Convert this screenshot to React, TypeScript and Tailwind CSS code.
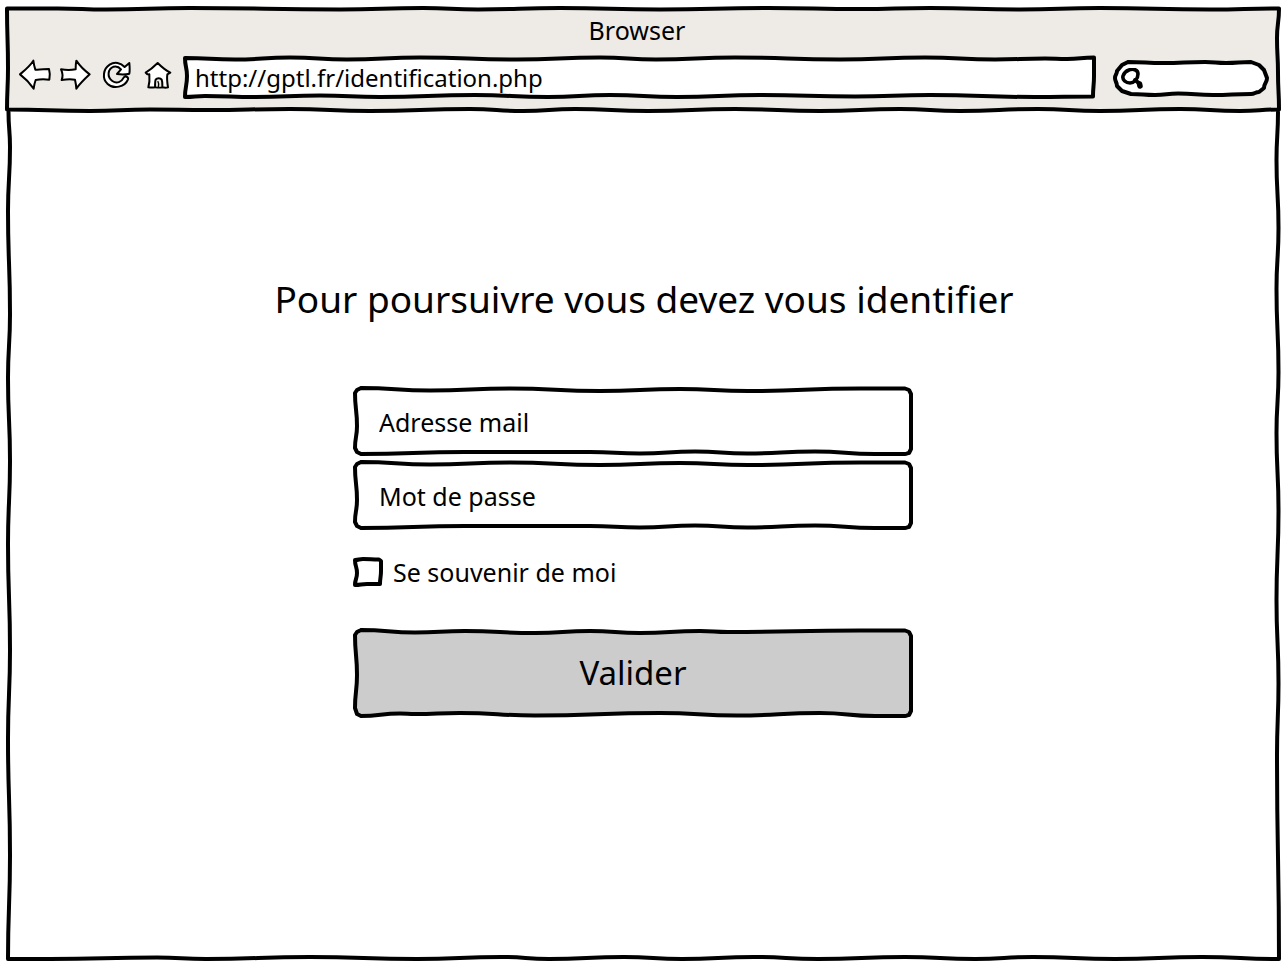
import type { ReactNode } from 'react';

type Point = [number, number];

// Joins points with soft waves: level tangents on long runs, straight cuts on corners.
function wavyPath(points: Point[], closed = true): string {
  const list = closed ? [...points, points[0]] : points;
  return list
    .map(([x, y], i) => {
      if (i === 0) return `M${x} ${y}`;
      const [px, py] = list[i - 1];
      const dx = Math.abs(x - px);
      const dy = Math.abs(y - py);
      if (dx > dy * 3) {
        const mx = (x + px) / 2;
        return `C${mx} ${py} ${mx} ${y} ${x} ${y}`;
      }
      if (dy > dx * 3) {
        const my = (y + py) / 2;
        return `C${px} ${my} ${x} ${my} ${x} ${y}`;
      }
      return `L${x} ${y}`;
    })
    .join(' ');
}

function Outline({
  width,
  height,
  points,
  fill = 'fill-white',
  closed = true,
}: {
  width: number;
  height: number;
  points: Point[];
  fill?: string;
  closed?: boolean;
}) {
  return (
    <svg
      aria-hidden="true"
      className="pointer-events-none absolute inset-0 h-full w-full overflow-visible"
      viewBox={`0 0 ${width} ${height}`}
      preserveAspectRatio="none"
    >
      <path
        d={wavyPath(points, closed)}
        className={`${fill} stroke-black`}
        strokeWidth="4"
        strokeLinejoin="round"
        strokeLinecap="round"
        vectorEffect="non-scaling-stroke"
      />
    </svg>
  );
}

const headerOutline: Point[] = [
  [-1, 0.5], [50, 0.5], [98, 1.5], [182, 0], [332, 1.5], [415, 0], [470, 1.5], [552, 0], [652, 1.5],
  [760, 0], [852, 1], [922, 0], [1012, 1.5], [1092, 0], [1202, 1.5], [1271, 0.5],
  [1269, 30], [1270, 65], [1271, 101.5],
  [1232, 103], [1172, 101], [1092, 103], [1030, 101], [952, 103], [892, 101], [812, 103], [727, 101],
  [640, 103], [567, 101], [515, 103], [462, 101], [362, 103], [282, 101], [200, 102], [142, 101.5],
  [82, 103], [-1, 101.5], [0, 60],
];

const bodyOutline: Point[] = [
  [0.5, 2], [2, 37], [0, 101], [2, 204], [0, 268], [2, 351], [0, 434], [2, 540], [0, 629], [2, 745], [0, 849],
  [42, 849], [149, 847.5], [198, 849], [302, 847], [409, 849], [494, 847], [541, 849], [616, 847],
  [674, 849], [746, 847], [810, 849], [897, 847], [967, 849], [1025, 847], [1107, 849], [1194, 847],
  [1271, 849],
  [1269, 645], [1270.5, 573], [1268.5, 490], [1270.5, 401], [1268.5, 323], [1270.5, 262],
  [1268.5, 179], [1270.5, 118], [1268.5, 50], [1270, 2],
];

const addressOutline: Point[] = [
  [0, 0], [50, 1.5], [105, -0.5], [162, 1.5], [235, -0.5], [332, 1.5], [415, -0.5], [471, 1.5], [550, -0.5],
  [655, 1.5], [740, -0.5], [810, 1.5], [860, 0.5], [882, 1], [909, -0.5],
  [909, 18], [908, 38.5],
  [850, 39], [745, 37], [670, 38.5], [575, 37], [492, 39], [425, 37], [363, 39], [290, 37], [195, 39],
  [135, 37.5], [70, 39], [20, 38], [0, 39], [2, 18],
];

const searchOutline: Point[] = [
  [15, 2], [50, 3], [92, 2], [113, 3], [138, 2], [146, 5], [151, 10], [154, 18], [151, 28], [146, 32],
  [138, 34], [100, 35], [65, 33.5], [42, 35], [18, 34], [9, 31], [4, 26], [2, 18], [4, 11], [9, 5],
];

const fieldOutline: Point[] = [
  [6, 0], [75, 2.5], [155, 0.5], [245, 3], [325, 1], [393, 3], [505, 0.5], [550, 0.5],
  [554, 2], [556, 6], [556, 61], [554, 65], [550, 66],
  [520, 66], [460, 63.5], [392, 65.5], [340, 63.5], [285, 65.5], [235, 64], [110, 64], [6, 66],
  [2, 64], [0, 60], [2, 38], [0, 5], [2, 2],
];

const buttonOutline: Point[] = [
  [6, 0], [60, 2.5], [110, 1], [180, 3], [235, 1], [285, 3], [345, 1], [373, 2], [505, 0.5], [550, 0.5],
  [554, 2], [556, 6], [556, 81], [554, 85], [550, 86],
  [520, 86], [465, 83], [382, 85.5], [305, 83], [180, 85.5], [105, 83], [60, 84], [45, 83.5], [6, 86],
  [2, 84], [0, 78], [2, 45], [0, 5], [2, 2],
];

const checkboxOutline: Point[] = [
  [0, 1], [8, 0], [24, 0.5], [26, 2], [26, 12], [25, 25], [12, 25], [0, 26], [2, 14],
];

function NavButton({ label, viewBox, children }: { label: string; viewBox: string; children: ReactNode }) {
  return (
    <button type="button" aria-label={label} className="h-[30px] w-[31px] shrink-0">
      <svg
        aria-hidden="true"
        className="h-full w-full overflow-visible fill-white stroke-black"
        viewBox={viewBox}
        strokeWidth="6"
        strokeLinejoin="round"
        strokeLinecap="round"
      >
        {children}
      </svg>
    </button>
  );
}

function Field({ label, type, name }: { label: string; type: string; name: string }) {
  return (
    <div className="relative h-[66px]">
      <Outline width={556} height={66} points={fieldOutline} />
      <input
        type={type}
        name={name}
        aria-label={label}
        placeholder={label}
        className="relative h-full w-full bg-transparent px-6 pt-[2px] outline-none placeholder:text-black placeholder:opacity-100"
      />
    </div>
  );
}

function BrowserBar() {
  return (
    <header className="relative h-[102px] px-[11px]">
      <Outline width={1272} height={102} points={headerOutline} fill="fill-[#eeebe6]" />
      <div className="relative pt-[6px] pr-[14px] text-center leading-8">Browser</div>
      <div className="relative mt-3 flex items-start">
        <nav aria-label="Navigation" className="mt-[2px] mr-3 flex gap-[10px]">
          <NavButton label="Page précédente" viewBox="57 30 93 90">
            <path d="M60 73 C74 61 90 48 100 32 C101 41 103 50 106 59 C120 60 134 57 147 57 C150 67 150 78 148 89 C134 87 121 87 107 90 C104 98 102 107 101 116 C90 100 76 85 60 73Z" />
          </NavButton>
          <NavButton label="Page suivante" viewBox="180 30 93 90">
            <path d="M183 58 C198 61 213 61 227 58 C227 49 227 41 229 32 C239 47 254 62 269 73 C255 86 241 99 229 116 C229 107 227 98 225 89 C211 87 198 88 185 90 C189 79 188 68 183 58Z" />
          </NavButton>
          <NavButton label="Actualiser" viewBox="303 30 93 90">
            <path d="M388 39 L374 51 C362 38 344 34 329 44 C309 57 306 85 322 101 C341 119 375 111 384 88 C386 80 374 77 371 83 C365 96 350 102 337 93 C320 81 323 57 341 50 C350 48 358 52 363 58 L351 72 C364 74 377 74 388 71 C390 60 389 49 388 39Z" />
          </NavButton>
          <NavButton label="Accueil" viewBox="426 30 93 90">
            <path d="M437 68 C450 60 462 50 473 39 C484 50 497 61 511 68 L502 73 C500 86 502 100 504 112 C498 114 492 113 487 112 C487 104 488 96 485 89 C481 83 471 83 467 89 C464 96 466 104 465 112 C459 113 452 113 445 112 C449 99 449 85 448 73 C444 74 440 72 437 68Z" />
            <path d="M467 112 C474 113 480 113 487 112" fill="none" strokeWidth="5" />
            <path d="M474 95 C477 100 476 107 475 111" fill="none" strokeWidth="4" />
          </NavButton>
        </nav>
        <div className="relative h-10 min-w-0 flex-1">
          <Outline width={910} height={40} points={addressOutline} />
          <input
            type="text"
            aria-label="Adresse"
            defaultValue="http://gptl.fr/identification.php"
            className="relative h-full w-full bg-transparent px-[10px] pb-[2px] text-[24px] outline-none"
          />
        </div>
        <div className="relative mt-[2px] ml-[18px] h-9 w-[156px] shrink-0">
          <Outline width={156} height={36} points={searchOutline} />
          <svg aria-hidden="true" className="absolute top-2 left-2 h-6 w-6 stroke-black" viewBox="0 0 24 24" fill="none" strokeLinecap="round">
            <path d="M8 2 C12 0 17 2 17 6 C17 11 13 15 9 15 C5 15 1 12 2 8 C3 5 5 3 8 2Z" strokeWidth="3.6" />
            <path d="M14 12 L19 16" strokeWidth="4" />
            <path d="M18.5 16 L19 18" strokeWidth="5.5" />
          </svg>
          <input
            type="search"
            aria-label="Rechercher"
            className="relative h-full w-full bg-transparent pr-4 pl-9 text-base outline-none"
          />
        </div>
      </div>
    </header>
  );
}

export default function App() {
  return (
    <div className="flex min-h-screen flex-col bg-white p-2 font-['Noto_Sans','Open_Sans',sans-serif] text-[25px] text-black">
      <BrowserBar />
      <main className="relative flex-1 px-4 pt-[160px] pb-[240px]">
        <Outline width={1272} height={848} points={bodyOutline} fill="fill-none" closed={false} />
        <h1 className="relative text-center text-[37px] leading-[58px]">
          Pour poursuivre vous devez vous identifier
        </h1>
        <div className="relative mx-auto mt-[60px] max-w-[578px] pr-[22px]">
          <form className="flex flex-col gap-2" onSubmit={(event) => event.preventDefault()}>
            <Field label="Adresse mail" type="email" name="email" />
            <Field label="Mot de passe" type="password" name="password" />
            <label className="mt-[18px] flex items-center gap-3 leading-9">
              <span className="relative h-[26px] w-[26px] shrink-0">
                <Outline width={26} height={26} points={checkboxOutline} />
                <input type="checkbox" name="remember" className="peer absolute inset-0 h-full w-full appearance-none" />
                <svg
                  aria-hidden="true"
                  className="pointer-events-none absolute inset-0 hidden h-full w-full stroke-black peer-checked:block"
                  viewBox="0 0 26 26"
                  fill="none"
                  strokeWidth="3"
                  strokeLinecap="round"
                >
                  <path d="M7 13 L12 19 L20 7" />
                </svg>
              </span>
              Se souvenir de moi
            </label>
            <button type="submit" className="relative mt-8 h-[86px] text-[33px]">
              <Outline width={556} height={86} points={buttonOutline} fill="fill-[#cccccc]" />
              <span className="relative">Valider</span>
            </button>
          </form>
        </div>
      </main>
    </div>
  );
}
